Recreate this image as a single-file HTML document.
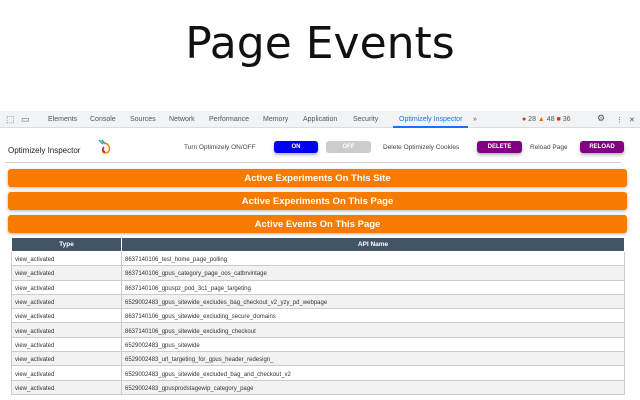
<!DOCTYPE html>
<html><head><meta charset="utf-8"><style>
*{margin:0;padding:0;box-sizing:border-box}
body{width:640px;height:400px;background:#fff;font-family:"Liberation Sans",sans-serif;position:relative;overflow:hidden}
.title{position:absolute;top:18px;left:0;width:640px;text-align:center;font-size:44px;color:#111;font-family:"DejaVu Sans","Liberation Sans",sans-serif;font-weight:normal}
.dt{position:absolute;top:111px;left:0;width:640px;height:17px;background:#f1f3f4;border-bottom:1px solid #ddd;font-size:7px;color:#555}
.dt span{position:absolute;top:5px}
.panel{position:absolute;top:128px;left:0;width:632px;height:272px;background:#fff}
.abs{position:absolute}
.btn{position:absolute;height:12px;border-radius:3px;color:#fff;font-size:6px;font-weight:bold;text-align:center;line-height:12px;box-shadow:0 2px 3px rgba(0,0,0,.3)}
.bar{position:absolute;left:8px;width:619px;height:18px;background:#f57c00;border-radius:3px;color:#fff;font-weight:bold;font-size:9.5px;text-align:center;line-height:19px;box-shadow:0 1px 3px rgba(0,0,0,.3)}
table{position:absolute;left:11px;top:237px;width:614px;border-collapse:collapse;font-size:6px;color:#333}
th{background:#435465;color:#fff;height:14px;font-size:6.5px;border:1px solid #fff;line-height:13px}
td{height:14.3px;border:1px solid #ccc;padding:3px 0 0 3px;line-height:10px;vertical-align:middle}
tr:nth-child(odd) td{background:#f2f2f2}
</style></head><body>
<div class="title">Page Events</div>
<div class="dt">
<span style="left:6px;top:3px;font-size:9px;color:#666">⬚</span><span style="left:21px;top:3px;font-size:9px;color:#666">▭</span>
<span style="left:48px">Elements</span><span style="left:90px">Console</span><span style="left:130px">Sources</span><span style="left:169px">Network</span><span style="left:209px">Performance</span><span style="left:263px">Memory</span><span style="left:303px">Application</span><span style="left:353px">Security</span>
<span style="left:399px;color:#1a73e8">Optimizely Inspector</span><span style="left:473px">»</span>
<div class="abs" style="left:393px;top:15px;width:75px;height:2px;background:#1a73e8"></div>
<span style="left:522px"><b style="color:#d93025">●</b> 28 <b style="color:#e8710a">▲</b> 48 <b style="color:#d93025">■</b> 36</span>
<span style="left:597px;font-size:9px;top:2px">⚙</span><span style="left:616px">⋮</span><span style="left:629px">✕</span>
</div>
<div class="panel"></div>
<div class="abs" style="left:8px;top:146px;font-size:8px;color:#222">Optimizely Inspector</div>
<svg class="abs" style="left:96px;top:138px" width="18" height="18" viewBox="0 0 18 18"><path d="M3 2 L7 6" stroke="#1a9cd8" stroke-width="1.5"/><path d="M6 2 L9 6" stroke="#36b24a" stroke-width="1.5"/><path d="M9 5 C15 7 15 15 9 15 C7 15 6 13 7 11" stroke="#f57c00" stroke-width="1.5" fill="none"/><path d="M8 9 C6 11 7 14 9 14" stroke="#c2185b" stroke-width="1.5" fill="none"/></svg>
<div class="abs" style="left:184px;top:144px;font-size:6.5px;color:#444">Turn Optimizely ON/OFF</div>
<div class="btn" style="left:274px;top:141px;width:44px;background:#0000f0">ON</div>
<div class="btn" style="left:326px;top:141px;width:45px;background:#ccc;box-shadow:none">OFF</div>
<div class="abs" style="left:383px;top:144px;font-size:6.5px;color:#444">Delete Optimizely Cookies</div>
<div class="btn" style="left:477px;top:141px;width:45px;background:#800080">DELETE</div>
<div class="abs" style="left:530px;top:144px;font-size:6.5px;color:#444">Reload Page</div>
<div class="btn" style="left:580px;top:141px;width:44px;background:#800080">RELOAD</div>
<div class="abs" style="left:5px;top:162px;width:616px;height:1px;background:#ccc"></div>
<div class="bar" style="top:169px">Active Experiments On This Site</div>
<div class="bar" style="top:192px">Active Experiments On This Page</div>
<div class="bar" style="top:215px">Active Events On This Page</div>
<table>
<tr><th style="width:110px">Type</th><th>API Name</th></tr>
<tr><td>view_activated</td><td>8637140106_test_home_page_polling</td></tr>
<tr><td>view_activated</td><td>8637140106_gpus_category_page_oos_catbrvintage</td></tr>
<tr><td>view_activated</td><td>8637140106_gpuspz_pod_3c1_page_targeting</td></tr>
<tr><td>view_activated</td><td>6529002483_gpus_sitewide_excludes_bag_checkout_v2_yzy_pd_webpage</td></tr>
<tr><td>view_activated</td><td>8637140106_gpus_sitewide_excluding_secure_domains</td></tr>
<tr><td>view_activated</td><td>8637140106_gpus_sitewide_excluding_checkout</td></tr>
<tr><td>view_activated</td><td>6529002483_gpus_sitewide</td></tr>
<tr><td>view_activated</td><td>6529002483_url_targeting_for_gpus_header_redesign_</td></tr>
<tr><td>view_activated</td><td>6529002483_gpus_sitewide_excluded_bag_and_checkout_v2</td></tr>
<tr><td>view_activated</td><td>6529002483_gpusprodstagewip_category_page</td></tr>
</table>
</body></html>
